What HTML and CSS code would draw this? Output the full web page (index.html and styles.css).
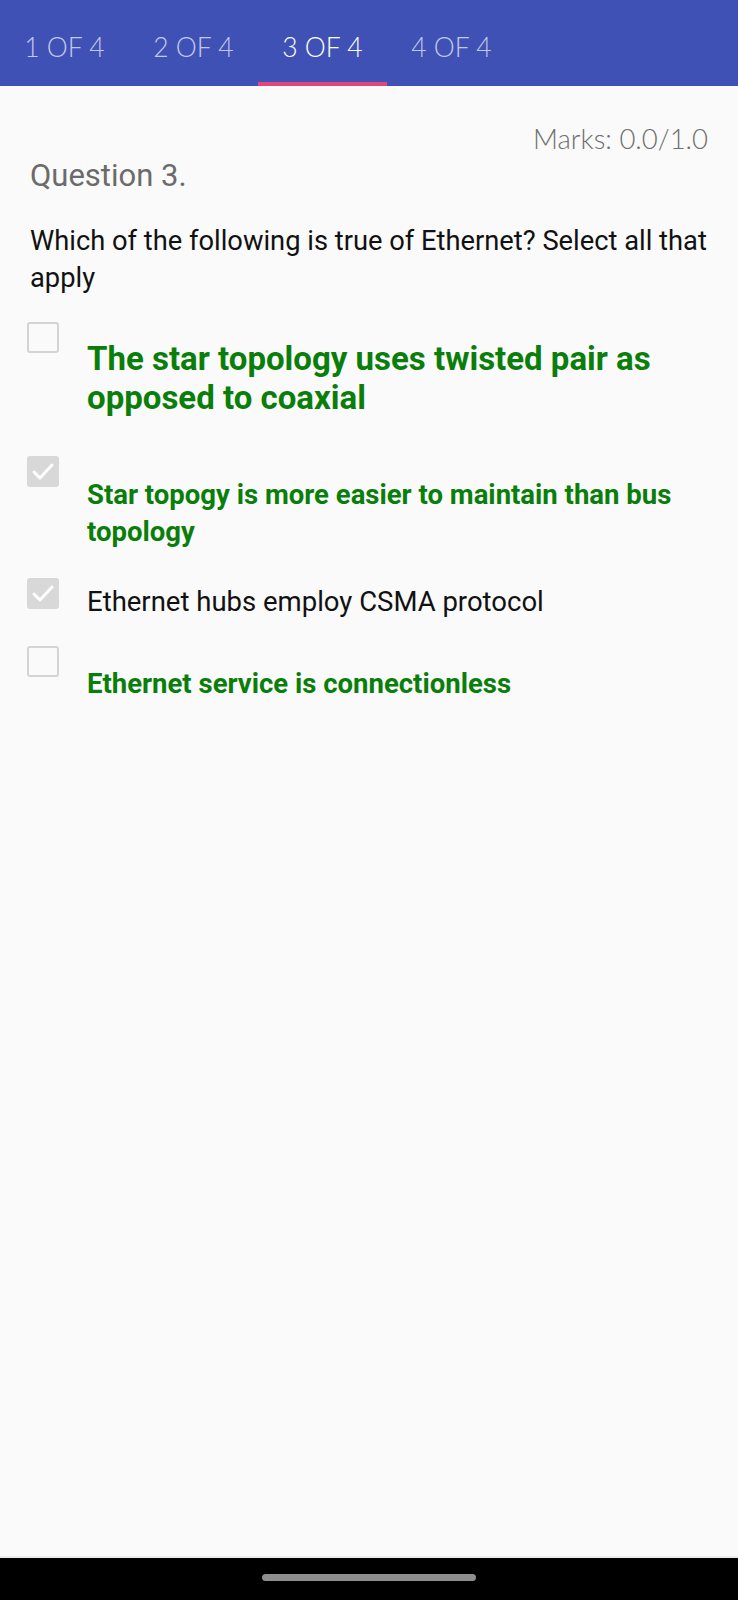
FILE: index.html
```html
<!DOCTYPE html>
<html>
<head>
<meta charset="utf-8">
<link rel="stylesheet" href="styles.css">
</head>
<body>
<div class="screen">
  <header class="tabbar">
    <div class="tab">1 OF 4</div>
    <div class="tab">2 OF 4</div>
    <div class="tab tab-active">3 OF 4</div>
    <div class="tab">4 OF 4</div>
  </header>
  <main class="content">
    <div class="marks">Marks: 0.0/1.0</div>
    <div class="qnum">Question 3.</div>
    <div class="qtext">Which of the following is true of Ethernet? Select all that apply</div>
    <div class="options">
      <div class="opt opt-1">
        <span class="box"></span>
        <div class="label label-big">The star topology uses twisted pair as opposed to coaxial</div>
      </div>
      <div class="opt opt-2">
        <span class="box box-checked"><svg viewBox="0 0 32 31" width="32" height="31"><polyline points="7,16 13,22 25,9" fill="none" stroke="#ffffff" stroke-width="3" stroke-linecap="round" stroke-linejoin="round"/></svg></span>
        <div class="label label-green">Star topogy is more easier to maintain than bus topology</div>
      </div>
      <div class="opt opt-3">
        <span class="box box-checked"><svg viewBox="0 0 32 31" width="32" height="31"><polyline points="7,16 13,22 25,9" fill="none" stroke="#ffffff" stroke-width="3" stroke-linecap="round" stroke-linejoin="round"/></svg></span>
        <div class="label label-plain">Ethernet hubs employ CSMA protocol</div>
      </div>
      <div class="opt opt-4">
        <span class="box"></span>
        <div class="label label-green label-last">Ethernet service is connectionless</div>
      </div>
    </div>
  </main>
  <footer class="navbar">
    <span class="handle"></span>
  </footer>
</div>
</body>
</html>
```
FILE: styles.css
```css
html, body {
  margin: 0;
  padding: 0;
  background: #fafafa;
}
.screen {
  width: 738px;
  height: 1600px;
  display: flex;
  flex-direction: column;
  background: #fafafa;
}
.tabbar {
  height: 86px;
  background: #3f51b5;
  display: flex;
  flex-shrink: 0;
}
.tab {
  width: 129px;
  height: 86px;
  box-sizing: border-box;
  padding-top: 33px;
  text-align: center;
  font-family: "Lato", sans-serif;
  font-weight: 300;
  font-size: 26.5px;
  line-height: 28px;
  color: #c3c9ec;
  white-space: nowrap;
}
.tab-active {
  color: #ffffff;
  border-bottom: 4px solid #e0457d;
}
.content {
  flex: 1;
  padding: 0 30px 0 27px;
}
.marks {
  margin-top: 37px;
  text-align: right;
  font-family: "Lato", sans-serif;
  font-weight: 300;
  font-size: 27.5px;
  line-height: 31px;
  color: #6f6f6f;
}
.qnum {
  margin-top: 4px;
  padding-left: 3px;
  font-family: "Roboto", sans-serif;
  font-size: 31px;
  line-height: 36px;
  color: #6b6b6b;
}
.qtext {
  margin-top: 29px;
  margin-right: -10px;
  padding-left: 3px;
  font-family: "Roboto", sans-serif;
  font-size: 27.3px;
  line-height: 37px;
  color: #111111;
}
.options {
  margin-top: 25px;
  display: flex;
  flex-direction: column;
}
.opt {
  display: flex;
  align-items: flex-start;
}
.box {
  width: 32px;
  height: 31px;
  box-sizing: border-box;
  flex-shrink: 0;
  border: 2.5px solid #d4d4d4;
  border-radius: 3px;
  margin-right: 28px;
}
.box-checked {
  border: none;
  background: #d8d8d8;
  display: block;
}
.box-checked svg {
  display: block;
}
.label {
  font-family: "Roboto", sans-serif;
  flex: 1;
}
.label-big {
  font-size: 33px;
  line-height: 39px;
  font-weight: 700;
  color: #0a7e0a;
  padding-top: 17px;
}
.label-green {
  font-size: 27.5px;
  line-height: 37px;
  font-weight: 700;
  color: #0a7e0a;
  padding-top: 20px;
}
.label-last {
  padding-top: 19px;
}
.label-plain {
  font-size: 27.5px;
  line-height: 37px;
  color: #111111;
  padding-top: 5px;
}
.opt-2 { margin-top: 39px; }
.opt-3 { margin-top: 28px; }
.opt-4 { margin-top: 26px; }
.navbar {
  height: 42px;
  flex-shrink: 0;
  background: #000000;
  display: flex;
  justify-content: center;
  align-items: flex-start;
  border-top: 2px solid #ededed;
}
.handle {
  width: 214px;
  height: 7px;
  margin-top: 16px;
  border-radius: 4px;
  background: #8e8e8e;
}
```
